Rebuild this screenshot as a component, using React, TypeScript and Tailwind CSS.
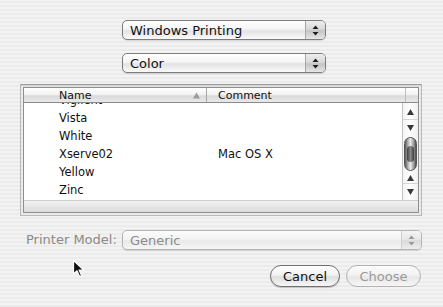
import React from "react";

const font = "font-['Lucida_Grande','DejaVu_Sans',sans-serif]";

function UpDown({ dim = false }: { dim?: boolean }) {
  const c = dim ? "#9a9a9a" : "#1e1e1e";
  return (
    <svg width="7" height="11" viewBox="0 0 7 11">
      <path d="M3.5 0.5 L6.5 4 L0.5 4 Z" fill={c} />
      <path d="M0.5 7 L6.5 7 L3.5 10.5 Z" fill={c} />
    </svg>
  );
}

function Popup({
  label,
  width,
  dim = false,
}: {
  label: string;
  width: string;
  dim?: boolean;
}) {
  return (
    <div
      className={`${width} h-[20px] flex rounded-[5px] border overflow-hidden shadow-[0_1px_1px_rgba(0,0,0,0.12)] ${
        dim
          ? "border-[#b4b4b4] text-[#8c8c8c] bg-[linear-gradient(#fcfcfc,#f3f3f3_45%,#e9e9e9_55%,#f6f6f6)]"
          : "border-[#7c7c7c] text-[#111] bg-[linear-gradient(#ffffff,#f5f5f5_45%,#e3e3e3_55%,#fafafa)]"
      }`}
    >
      <div className="flex-1 flex items-center pl-[7px] text-[13px] leading-none">
        {label}
      </div>
      <div
        className={`w-[20px] flex items-center justify-center border-l ${
          dim
            ? "border-[#cfcfcf] bg-[linear-gradient(#f4f4f4,#e8e8e8_45%,#dadada_55%,#eeeeee)]"
            : "border-[#a6a6a6] bg-[linear-gradient(#eeeeee,#d9d9d9_45%,#c4c4c4_55%,#e6e6e6)]"
        }`}
      >
        <UpDown dim={dim} />
      </div>
    </div>
  );
}

function Tri({ up }: { up: boolean }) {
  return (
    <svg width="7" height="6" viewBox="0 0 7 6">
      {up ? (
        <path d="M3.5 0 L7 6 L0 6 Z" fill="#3a3a3a" />
      ) : (
        <path d="M0 0 L7 0 L3.5 6 Z" fill="#3a3a3a" />
      )}
    </svg>
  );
}

const rows: [string, string][] = [
  ["Vigilent", ""],
  ["Vista", ""],
  ["White", ""],
  ["Xserve02", "Mac OS X"],
  ["Yellow", ""],
  ["Zinc", ""],
];

function Scroller() {
  return (
    <div className="w-[16px] h-full flex flex-col border-l border-[#c4c4c4] bg-[linear-gradient(90deg,#f4f4f4,#ffffff_50%,#f0f0f0)]">
      <div className="h-[2px]" />
      <div className="h-[15px] flex items-center justify-center border-b border-[#d6d6d6]">
        <Tri up />
      </div>
      <div className="h-[15px] flex items-center justify-center">
        <Tri up={false} />
      </div>
      <div className="h-[38px] flex items-center justify-center">
        <div className="w-[13px] h-[34px] rounded-full bg-[linear-gradient(90deg,#5a5a5a,#c9c9c9_35%,#e8e8e8_50%,#9a9a9a_80%,#4a4a4a)] border border-[#555] flex items-center justify-center">
          <div className="w-[7px] h-[16px] rounded-full bg-[linear-gradient(90deg,#3c3c3c,#8a8a8a_50%,#3c3c3c)]" />
        </div>
      </div>
      <div className="h-[11px] flex items-center justify-center border-b border-[#d6d6d6]">
        <Tri up />
      </div>
      <div className="h-[15px] flex items-center justify-center">
        <Tri up={false} />
      </div>
    </div>
  );
}

function Table() {
  return (
    <div className="ml-[20px] mt-[11px] w-[402px] h-[132px] p-[2px] border border-[#b9b9b9] border-t-[#9d9d9d] shadow-[inset_0_1px_2px_rgba(0,0,0,0.12)]">
      <div className="w-full h-full flex flex-col border border-[#8e8e8e] bg-white">
        <div className="h-[15px] flex border-b border-[#8a8a8a] bg-[linear-gradient(#ffffff,#f1f1f1_50%,#d9d9d9_55%,#e9e9e9)] text-[11px] leading-none text-[#111]">
          <div className="w-[183px] flex items-center pl-[35px] pr-[6px] border-r border-[#a9a9a9]">
            <span className="flex-1">Name</span>
            <svg width="7" height="7" viewBox="0 0 7 7">
              <path d="M3.5 0.5 L7 6.5 L0 6.5 Z" fill="#9b9b9b" />
            </svg>
          </div>
          <div className="w-[199px] flex items-center pl-[11px] border-r border-[#bdbdbd]">
            Comment
          </div>
          <div className="flex-1" />
        </div>
        <div className="h-[97px] flex">
          <div className="flex-1 overflow-hidden">
            <div className="-mt-[11px] text-[11.5px] leading-none text-[#111]">
              {rows.map(([n, c]) => (
                <div key={n} className="h-[18px] flex items-center">
                  <div className="w-[183px] pl-[35px]">{n}</div>
                  <div className="pl-[11px]">{c}</div>
                </div>
              ))}
            </div>
          </div>
          <Scroller />
        </div>
        <div className="flex-1 border-t border-[#cfcfcf] bg-[linear-gradient(#f2f2f2,#dcdcdc)]" />
      </div>
    </div>
  );
}

function Cursor() {
  return (
    <svg
      className="absolute left-[72px] top-[259px]"
      width="14"
      height="20"
      viewBox="0 0 14 20"
    >
      <path
        d="M1.5 1.5 L1.5 15 L5 11.8 L7.6 17.5 L9.6 16.6 L7.1 11 L11.8 11 Z"
        fill="#111"
        stroke="#fff"
        strokeWidth="1.2"
        strokeLinejoin="round"
      />
    </svg>
  );
}

export default function App() {
  return (
    <div
      className={`relative w-[443px] h-[307px] overflow-hidden ${font} bg-[#eeeeee] bg-[image:repeating-linear-gradient(0deg,#ebebeb_0px,#ebebeb_2px,#f3f3f3_2px,#f3f3f3_4px)]`}
    >
      <div className="pt-[20px] pl-[122px] flex flex-col gap-[13px]">
        <Popup label="Windows Printing" width="w-[204px]" />
        <Popup label="Color" width="w-[204px]" />
      </div>
      <Table />
      <div className="mt-[14px] flex items-center">
        <div className="w-[122px] pl-[26px] text-[13px] text-[#8a8a8a]">
          Printer Model:
        </div>
        <Popup label="Generic" width="w-[300px]" dim />
      </div>
      <div className="mt-[15px] flex justify-end gap-[6px] pr-[22px]">
        <button className="w-[70px] h-[22px] rounded-full border border-[#6f6f6f] bg-[linear-gradient(#ffffff,#f2f2f2_45%,#dedede_55%,#f7f7f7)] shadow-[0_1px_1px_rgba(0,0,0,0.2)] text-[13px] leading-none text-[#111]">
          Cancel
        </button>
        <button className="w-[75px] h-[22px] rounded-full border border-[#b3b3b3] bg-[linear-gradient(#fbfbfb,#f2f2f2_45%,#e7e7e7_55%,#f6f6f6)] text-[13px] leading-none text-[#9a9a9a]">
          Choose
        </button>
      </div>
      <Cursor />
    </div>
  );
}
